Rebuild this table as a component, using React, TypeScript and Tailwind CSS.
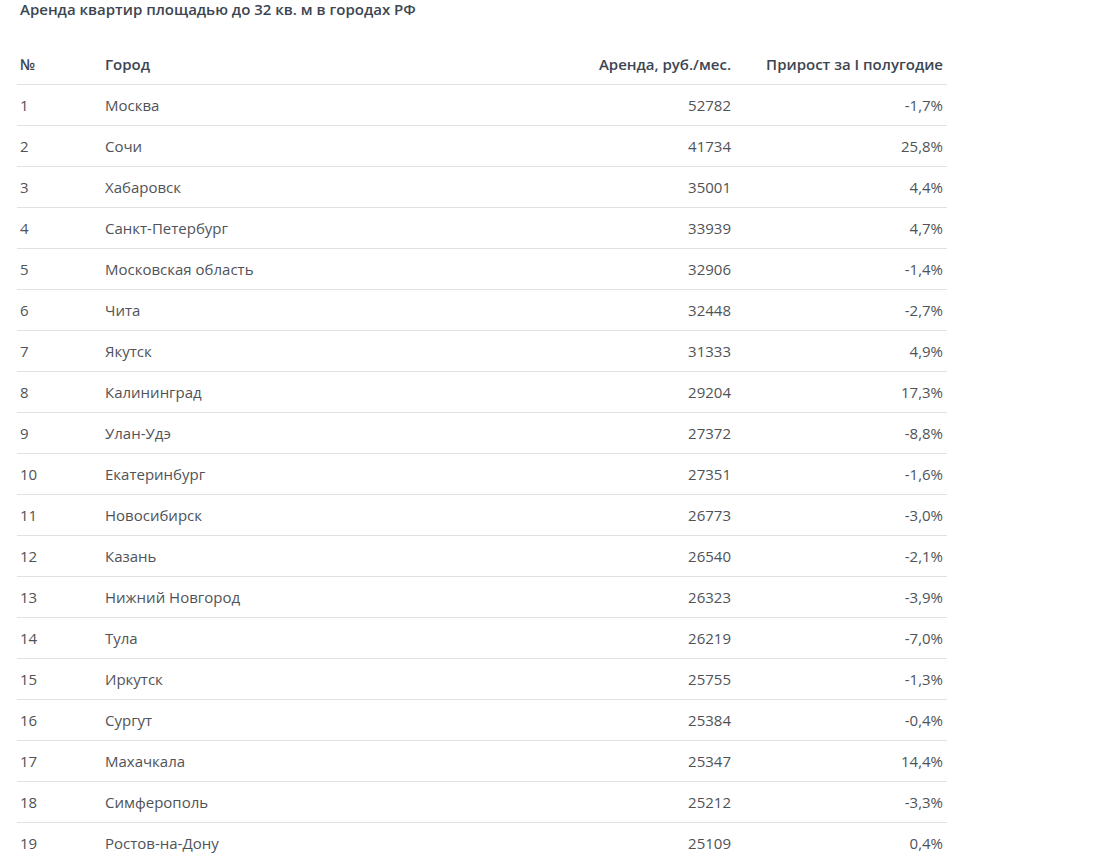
const rows: [string, string, string][] = [
  ['Москва', '52782', '-1,7%'],
  ['Сочи', '41734', '25,8%'],
  ['Хабаровск', '35001', '4,4%'],
  ['Санкт-Петербург', '33939', '4,7%'],
  ['Московская область', '32906', '-1,4%'],
  ['Чита', '32448', '-2,7%'],
  ['Якутск', '31333', '4,9%'],
  ['Калининград', '29204', '17,3%'],
  ['Улан-Удэ', '27372', '-8,8%'],
  ['Екатеринбург', '27351', '-1,6%'],
  ['Новосибирск', '26773', '-3,0%'],
  ['Казань', '26540', '-2,1%'],
  ['Нижний Новгород', '26323', '-3,9%'],
  ['Тула', '26219', '-7,0%'],
  ['Иркутск', '25755', '-1,3%'],
  ['Сургут', '25384', '-0,4%'],
  ['Махачкала', '25347', '14,4%'],
  ['Симферополь', '25212', '-3,3%'],
  ['Ростов-на-Дону', '25109', '0,4%'],
]

export default function App() {
  return (
    <div className="h-[861px] overflow-hidden bg-white pl-[17px] font-['Open_Sans',sans-serif]">
      <h2 className="h-[18px] pl-[3px] text-[15px] font-semibold leading-[18px] text-[#3c4551]">
        Аренда квартир площадью до 32 кв. м в городах РФ
      </h2>
      <table className="mt-[25px] w-[930px] border-collapse text-[15px] text-[#4f5358]">
        <thead>
          <tr className="h-[41px] border-b border-[#dee2e6] text-[#3c4551]">
            <th className="w-[88px] pt-[2px] pl-[3px] text-left font-semibold">№</th>
            <th className="pt-[2px] text-left font-semibold">Город</th>
            <th className="w-[300px] pt-[2px] pr-[4px] text-right font-semibold">Аренда, руб./мес.</th>
            <th className="w-[212px] pt-[2px] pr-[4px] text-right font-semibold">Прирост за I полугодие</th>
          </tr>
        </thead>
        <tbody>
          {rows.map(([city, rent, growth], i) => (
            <tr key={city} className="h-[41px] border-b border-[#dee2e6]">
              <td className="pt-[2px] pl-[3px]">{i + 1}</td>
              <td className="pt-[2px]">{city}</td>
              <td className="pt-[2px] pr-[4px] text-right">{rent}</td>
              <td className="pt-[2px] pr-[4px] text-right">{growth}</td>
            </tr>
          ))}
        </tbody>
      </table>
    </div>
  )
}
